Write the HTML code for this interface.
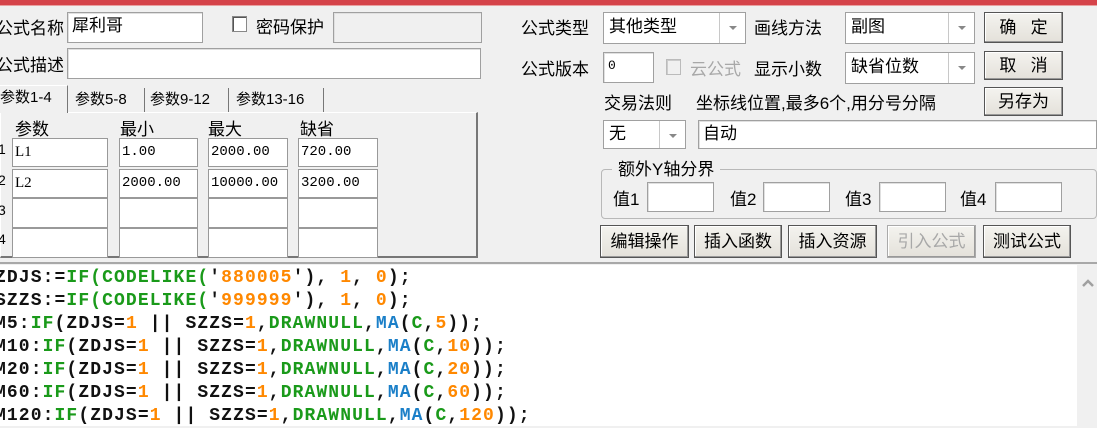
<!DOCTYPE html>
<html><head><meta charset="utf-8"><style>
*{box-sizing:border-box;margin:0;padding:0}
body{width:1097px;height:426px;background:#f0f0f0;position:relative;overflow:hidden;font-family:"Liberation Sans","Noto Sans CJK SC",sans-serif;font-size:17px;color:#000}
.a{position:absolute;white-space:nowrap}
.in{position:absolute;background:#fff;border:1px solid #a0a0a0;box-shadow:inset 1px 1px 0 #e0e0e0;font-size:17px;line-height:26px;padding-left:4px}
.sel{position:absolute;background:#fff;border:1px solid #a0a0a0;padding-left:5px;line-height:28px}
.sel .d{position:absolute;right:0;top:0;bottom:0;width:26px;border-left:1px solid #c8c8c8}
.sel .d:after{content:"";position:absolute;left:9px;top:13px;border:4px solid transparent;border-top:4px solid #888}
.btn{position:absolute;background:linear-gradient(#f4f3ef,#e4e1da);border:1px solid #555;box-shadow:inset -1px -1px 0 #999,inset 1px 1px 0 #fff;text-align:center;font-size:17px}
.cb{position:absolute;width:15px;height:16px;border:1px solid #888;background:#fff;box-shadow:inset 1px 1px 0 #555}
.tab{position:absolute;top:88px;height:24px;border-right:1px solid #777;font-size:15px;line-height:24px;padding-left:4px}
.pi{position:absolute;background:#fff;border:1px solid #999;font-family:"Liberation Mono",monospace;font-size:14px;line-height:26px;padding-left:2px}
.code{position:absolute;left:0;top:265px;width:1077px;height:161px;background:#fff}
.code div{font-family:"Liberation Mono",monospace;font-weight:bold;font-size:18px;letter-spacing:1.1px;height:23px;line-height:23px;white-space:pre;color:#111;margin-left:-5px}
.g{color:#1a9a1a}.o{color:#ff8800}.b{color:#1a7fc8}
</style></head><body>
<div class="a" style="left:0;top:0;width:1097px;height:5px;background:#d5434a"></div>
<div class="a" style="left:0;top:5px;width:1097px;height:1px;background:#e9a0a0"></div>

<div class="a" style="left:-4px;top:14px">公式名称</div>
<div class="in" style="left:67px;top:12px;width:136px;height:31px">犀利哥</div>
<div class="cb" style="left:232px;top:16px"></div>
<div class="a" style="left:256px;top:13px">密码保护</div>
<div class="in" style="left:333px;top:12px;width:149px;height:31px;background:#f0f0f0"></div>
<div class="a" style="left:-4px;top:51px">公式描述</div>
<div class="in" style="left:67px;top:48px;width:414px;height:31px"></div>

<div class="a" style="left:0;top:112px;width:478px;height:146px;border:1px solid #fff;border-right:2px solid #777;border-bottom:2px solid #777"></div>
<div class="tab" style="left:-4px;top:85px;height:28px;width:72px;background:#f0f0f0;border-top:1px solid #fff">参数1-4</div>
<div class="tab" style="left:71px;width:74px">参数5-8</div>
<div class="tab" style="left:146px;width:83px">参数9-12</div>
<div class="tab" style="left:232px;width:92px">参数13-16</div>
<div class="a" style="left:15px;top:115px">参数</div>
<div class="a" style="left:120px;top:115px">最小</div>
<div class="a" style="left:208px;top:115px">最大</div>
<div class="a" style="left:300px;top:115px">缺省</div>
<div class="a" style="left:-2px;top:141px;font-size:14px">1</div>
<div class="a" style="left:-2px;top:172px;font-size:14px">2</div>
<div class="a" style="left:-2px;top:202px;font-size:14px">3</div>
<div class="a" style="left:-2px;top:231px;font-size:14px">4</div>
<div class="pi" style="left:12px;top:138px;width:96px;height:29px;font-family:'Liberation Serif',serif;font-size:15px">L1</div>
<div class="pi" style="left:119px;top:138px;width:79px;height:29px">1.00</div>
<div class="pi" style="left:208px;top:138px;width:80px;height:29px">2000.00</div>
<div class="pi" style="left:298px;top:138px;width:80px;height:29px">720.00</div>
<div class="pi" style="left:12px;top:169px;width:96px;height:29px;font-family:'Liberation Serif',serif;font-size:15px">L2</div>
<div class="pi" style="left:119px;top:169px;width:79px;height:29px">2000.00</div>
<div class="pi" style="left:208px;top:169px;width:80px;height:29px">10000.00</div>
<div class="pi" style="left:298px;top:169px;width:80px;height:29px">3200.00</div>
<div class="pi" style="left:12px;top:198px;width:96px;height:30px"></div>
<div class="pi" style="left:119px;top:198px;width:79px;height:30px"></div>
<div class="pi" style="left:208px;top:198px;width:80px;height:30px"></div>
<div class="pi" style="left:298px;top:198px;width:80px;height:30px"></div>
<div class="pi" style="left:12px;top:228px;width:96px;height:30px"></div>
<div class="pi" style="left:119px;top:228px;width:79px;height:30px"></div>
<div class="pi" style="left:208px;top:228px;width:80px;height:30px"></div>
<div class="pi" style="left:298px;top:228px;width:80px;height:30px"></div>

<div class="a" style="left:521px;top:14px">公式类型</div>
<div class="sel" style="left:603px;top:12px;width:143px;height:32px">其他类型<div class="d"></div></div>
<div class="a" style="left:754px;top:14px">画线方法</div>
<div class="sel" style="left:845px;top:12px;width:130px;height:32px">副图<div class="d"></div></div>
<div class="btn" style="left:984px;top:12px;width:79px;height:31px;line-height:29px">确&nbsp;&nbsp;&nbsp;定</div>
<div class="a" style="left:521px;top:55px">公式版本</div>
<div class="in" style="left:603px;top:52px;width:51px;height:31px;font-family:'Liberation Mono',monospace;font-size:13px">0</div>
<div class="cb" style="left:666px;top:59px;border-color:#bbb;box-shadow:inset 1px 1px 0 #ccc;background:#f0f0f0"></div>
<div class="a" style="left:690px;top:55px;color:#a8a8a8">云公式</div>
<div class="a" style="left:754px;top:55px">显示小数</div>
<div class="sel" style="left:845px;top:52px;width:130px;height:32px">缺省位数<div class="d"></div></div>
<div class="btn" style="left:984px;top:51px;width:79px;height:29px;line-height:27px">取&nbsp;&nbsp;&nbsp;消</div>
<div class="btn" style="left:984px;top:87px;width:79px;height:29px;line-height:27px">另存为</div>
<div class="a" style="left:604px;top:89px">交易法则</div>
<div class="a" style="left:696px;top:89px">坐标线位置,最多6个,用分号分隔</div>
<div class="sel" style="left:603px;top:120px;width:83px;height:29px;line-height:26px">无<div class="d"></div></div>
<div class="in" style="left:698px;top:120px;width:399px;height:29px">自动</div>
<div class="a" style="left:601px;top:169px;width:496px;height:50px;border:1px solid #b8b8b8;border-radius:4px"></div>
<div class="a" style="left:612px;top:155px;background:#f0f0f0;padding:0 6px">额外Y轴分界</div>
<div class="a" style="left:613px;top:185px">值1</div>
<div class="in" style="left:647px;top:182px;width:67px;height:30px"></div>
<div class="a" style="left:730px;top:185px">值2</div>
<div class="in" style="left:763px;top:182px;width:67px;height:30px"></div>
<div class="a" style="left:845px;top:185px">值3</div>
<div class="in" style="left:879px;top:182px;width:67px;height:30px"></div>
<div class="a" style="left:960px;top:185px">值4</div>
<div class="in" style="left:995px;top:182px;width:67px;height:30px"></div>
<div class="btn" style="left:600px;top:225px;width:89px;height:33px;line-height:31px">编辑操作</div>
<div class="btn" style="left:694px;top:225px;width:88px;height:33px;line-height:31px">插入函数</div>
<div class="btn" style="left:788px;top:225px;width:89px;height:33px;line-height:31px">插入资源</div>
<div class="btn" style="left:887px;top:225px;width:89px;height:33px;line-height:31px;color:#a8a8a8;border-color:#aaa">引入公式</div>
<div class="btn" style="left:983px;top:225px;width:88px;height:33px;line-height:31px">测试公式</div>

<div class="a" style="left:0;top:262px;width:1097px;height:2px;background:#a8a8a8"></div>
<div class="code" style="padding-top:2px">
<div>ZDJS:=<span class="g">IF(CODELIKE(</span>'<span class="o">880005</span>'), <span class="o">1</span>, <span class="o">0</span>);</div>
<div>SZZS:=<span class="g">IF(CODELIKE(</span>'<span class="o">999999</span>'), <span class="o">1</span>, <span class="o">0</span>);</div>
<div>M5:<span class="g">IF</span>(ZDJS=<span class="o">1</span> || SZZS=<span class="o">1</span>,<span class="g">DRAWNULL</span>,<span class="b">MA</span>(<span class="g">C</span>,<span class="o">5</span>));</div>
<div>M10:<span class="g">IF</span>(ZDJS=<span class="o">1</span> || SZZS=<span class="o">1</span>,<span class="g">DRAWNULL</span>,<span class="b">MA</span>(<span class="g">C</span>,<span class="o">10</span>));</div>
<div>M20:<span class="g">IF</span>(ZDJS=<span class="o">1</span> || SZZS=<span class="o">1</span>,<span class="g">DRAWNULL</span>,<span class="b">MA</span>(<span class="g">C</span>,<span class="o">20</span>));</div>
<div>M60:<span class="g">IF</span>(ZDJS=<span class="o">1</span> || SZZS=<span class="o">1</span>,<span class="g">DRAWNULL</span>,<span class="b">MA</span>(<span class="g">C</span>,<span class="o">60</span>));</div>
<div>M120:<span class="g">IF</span>(ZDJS=<span class="o">1</span> || SZZS=<span class="o">1</span>,<span class="g">DRAWNULL</span>,<span class="b">MA</span>(<span class="g">C</span>,<span class="o">120</span>));</div>
</div>
<div class="a" style="left:1077px;top:265px;width:20px;height:161px;background:#f0f0f0"></div>
<svg class="a" style="left:1082px;top:278px" width="12" height="10"><path d="M1 8 L6 3 L11 8" stroke="#a0a0a0" stroke-width="2.5" fill="none"/></svg>
</body></html>
